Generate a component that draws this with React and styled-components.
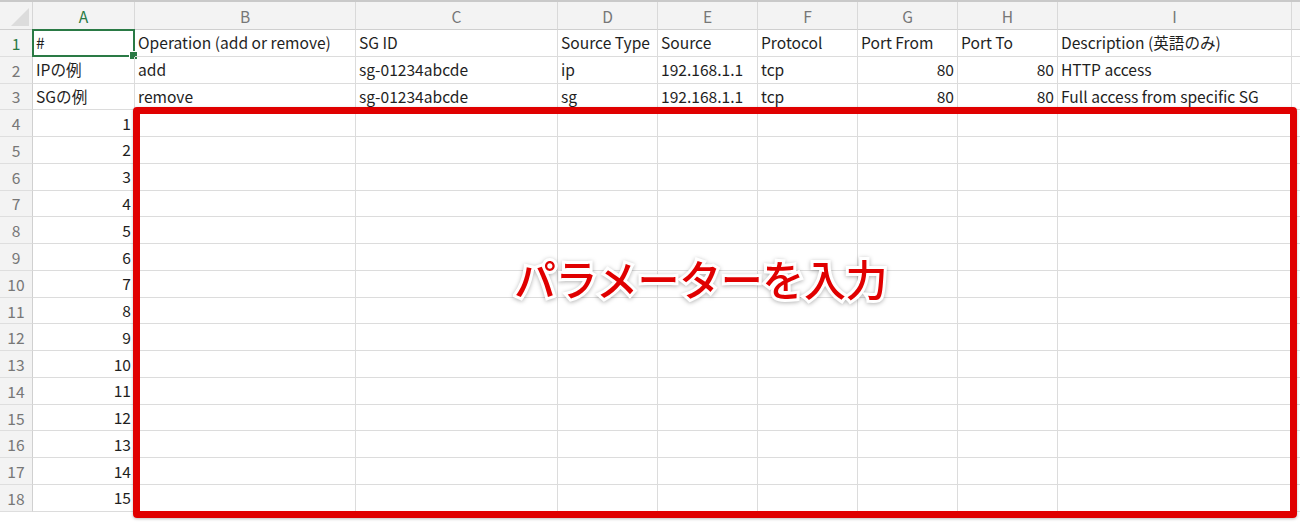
import React from 'react';
import styled, { createGlobalStyle } from 'styled-components';

const GlobalStyle = createGlobalStyle`
  html, body {
    margin: 0;
    padding: 0;
    background: #ffffff;
  }
  body {
    font-family: 'Noto Sans CJK JP', 'Noto Sans', sans-serif;
  }
`;

// last column is only partly in view, so it gets no letter
const COLS = [
  { key: 'A', width: 102 },
  { key: 'B', width: 221 },
  { key: 'C', width: 202 },
  { key: 'D', width: 100 },
  { key: 'E', width: 100 },
  { key: 'F', width: 100 },
  { key: 'G', width: 100 },
  { key: 'H', width: 100 },
  { key: 'I', width: 234 },
  { key: 'J', width: 100, hidden: true },
];

const DATA = [
  ['#', 'Operation (add or remove)', 'SG ID', 'Source Type', 'Source', 'Protocol', 'Port From', 'Port To', 'Description (英語のみ)'],
  ['IPの例', 'add', 'sg-01234abcde', 'ip', '192.168.1.1', 'tcp', 80, 80, 'HTTP access'],
  ['SGの例', 'remove', 'sg-01234abcde', 'sg', '192.168.1.1', 'tcp', 80, 80, 'Full access from specific SG'],
  ...Array.from({ length: 15 }, (_, i) => [i + 1]),
];

const Frame = styled.div`
  position: relative;
  width: 1300px;
  height: 522px;
  overflow: hidden;
  background: #ffffff;
`;

const Sheet = styled.div`
  display: grid;
  grid-template-columns: 33px ${COLS.map(c => `${c.width}px`).join(' ')};
  grid-template-rows: 28px repeat(18, 26.78px);
  border-top: 2px solid #c9c9c9;
  font-size: 15.6px;
  color: #1f1f1f;
`;

const Corner = styled.div`
  position: relative;
  background: #f3f3f3;
  border-right: 1px solid #d6d6d6;
  border-bottom: 1px solid #cfcfcf;

  &::after {
    content: '';
    position: absolute;
    right: 3px;
    bottom: 3px;
    width: 18px;
    height: 18px;
    background: #dcdcdc;
    clip-path: polygon(100% 0, 100% 100%, 0 100%);
  }
`;

const ColHeader = styled.div`
  display: flex;
  align-items: center;
  justify-content: center;
  background: #f3f3f3;
  border-right: 1px solid #d9d9d9;
  border-bottom: 1px solid #cfcfcf;
  font-size: 15.6px;
  color: ${p => (p.$active ? '#2a7a45' : '#777777')};
`;

const RowHeader = styled.div`
  display: flex;
  align-items: center;
  justify-content: center;
  background: #f3f3f3;
  border-right: 1px solid #d0d0d0;
  border-bottom: 1px solid #dedede;
  font-size: 15.6px;
  color: ${p => (p.$active ? '#2a7a45' : '#777777')};
`;

const Cell = styled.div`
  position: relative;
  display: flex;
  align-items: center;
  justify-content: ${p => (p.$num ? 'flex-end' : 'flex-start')};
  padding: 0 3px 1px 3px;
  border-right: 1px solid #dcdcdc;
  border-bottom: 1px solid #dcdcdc;
  white-space: nowrap;
  box-sizing: border-box;
  min-width: 0;
`;

const Selection = styled.div`
  position: absolute;
  inset: -1px;
  border: 2px solid #2a7a45;
  pointer-events: none;

  &::after {
    content: '';
    position: absolute;
    right: -5px;
    bottom: -5px;
    width: 7px;
    height: 7px;
    background: #2a7a45;
    border: 1px solid #ffffff;
  }
`;

const Callout = styled.div`
  position: absolute;
  left: 133px;
  top: 107px;
  width: 1164px;
  height: 411px;
  box-sizing: border-box;
  display: flex;
  align-items: flex-start;
  padding: 139px 0 0 374px;
  border: 7px solid #e00000;
  border-radius: 4px;
  box-shadow: 0 1px 3px rgba(0, 0, 0, 0.25);
  pointer-events: none;
`;

const CalloutLabel = styled.span`
  font-family: 'Noto Sans CJK JP', sans-serif;
  font-size: 42px;
  line-height: 1.2;
  font-weight: 500;
  letter-spacing: -0.4px;
  color: #e00000;
  white-space: nowrap;
  -webkit-text-stroke: 6px #ffffff;
  paint-order: stroke fill;
  filter: drop-shadow(0 1px 2px rgba(0, 0, 0, 0.3));
`;

export default function App() {
  return (
    <Frame>
      <GlobalStyle />
      <Sheet>
        <Corner />
        {COLS.map(c => (
          <ColHeader key={c.key} $active={c.key === 'A'}>{c.hidden ? '' : c.key}</ColHeader>
        ))}
        {DATA.map((row, r) => (
          <React.Fragment key={r}>
            <RowHeader $active={r === 0}>{r + 1}</RowHeader>
            {COLS.map((c, ci) => {
              const v = row[ci];
              return (
                <Cell key={c.key} $num={typeof v === 'number'}>
                  {v}
                  {r === 0 && ci === 0 && <Selection />}
                </Cell>
              );
            })}
          </React.Fragment>
        ))}
      </Sheet>
      <Callout>
        <CalloutLabel>パラメーターを入力</CalloutLabel>
      </Callout>
    </Frame>
  );
}
